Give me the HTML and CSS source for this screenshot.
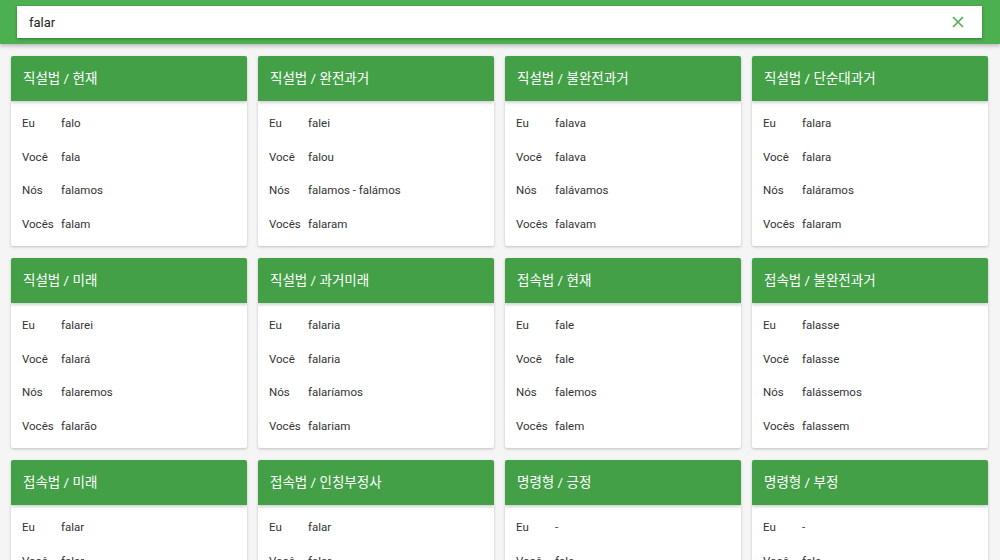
FILE: index.html
```html
<!DOCTYPE html>
<html lang="ko">
<head>
<meta charset="utf-8">
<link rel="stylesheet" href="styles.css">
</head>
<body>
<header class="topbar">
  <div class="search">
    <span class="search-text">falar</span>
    <svg class="clear" width="12" height="12" viewBox="0 0 12 12"><path d="M1 1L11 11M11 1L1 11" stroke="#4CAF50" stroke-width="1.6" fill="none"/></svg>
  </div>
</header>
<main class="grid">
  <section class="card"><h2 class="card-head">직설법 / 현재</h2><div class="card-body">
    <div class="row"><span class="who">Eu</span><span>falo</span></div>
    <div class="row"><span class="who">Você</span><span>fala</span></div>
    <div class="row"><span class="who">Nós</span><span>falamos</span></div>
    <div class="row"><span class="who">Vocês</span><span>falam</span></div>
  </div></section>
  <section class="card"><h2 class="card-head">직설법 / 완전과거</h2><div class="card-body">
    <div class="row"><span class="who">Eu</span><span>falei</span></div>
    <div class="row"><span class="who">Você</span><span>falou</span></div>
    <div class="row"><span class="who">Nós</span><span>falamos - falámos</span></div>
    <div class="row"><span class="who">Vocês</span><span>falaram</span></div>
  </div></section>
  <section class="card"><h2 class="card-head">직설법 / 불완전과거</h2><div class="card-body">
    <div class="row"><span class="who">Eu</span><span>falava</span></div>
    <div class="row"><span class="who">Você</span><span>falava</span></div>
    <div class="row"><span class="who">Nós</span><span>falávamos</span></div>
    <div class="row"><span class="who">Vocês</span><span>falavam</span></div>
  </div></section>
  <section class="card"><h2 class="card-head">직설법 / 단순대과거</h2><div class="card-body">
    <div class="row"><span class="who">Eu</span><span>falara</span></div>
    <div class="row"><span class="who">Você</span><span>falara</span></div>
    <div class="row"><span class="who">Nós</span><span>faláramos</span></div>
    <div class="row"><span class="who">Vocês</span><span>falaram</span></div>
  </div></section>
  <section class="card"><h2 class="card-head">직설법 / 미래</h2><div class="card-body">
    <div class="row"><span class="who">Eu</span><span>falarei</span></div>
    <div class="row"><span class="who">Você</span><span>falará</span></div>
    <div class="row"><span class="who">Nós</span><span>falaremos</span></div>
    <div class="row"><span class="who">Vocês</span><span>falarão</span></div>
  </div></section>
  <section class="card"><h2 class="card-head">직설법 / 과거미래</h2><div class="card-body">
    <div class="row"><span class="who">Eu</span><span>falaria</span></div>
    <div class="row"><span class="who">Você</span><span>falaria</span></div>
    <div class="row"><span class="who">Nós</span><span>falaríamos</span></div>
    <div class="row"><span class="who">Vocês</span><span>falariam</span></div>
  </div></section>
  <section class="card"><h2 class="card-head">접속법 / 현재</h2><div class="card-body">
    <div class="row"><span class="who">Eu</span><span>fale</span></div>
    <div class="row"><span class="who">Você</span><span>fale</span></div>
    <div class="row"><span class="who">Nós</span><span>falemos</span></div>
    <div class="row"><span class="who">Vocês</span><span>falem</span></div>
  </div></section>
  <section class="card"><h2 class="card-head">접속법 / 불완전과거</h2><div class="card-body">
    <div class="row"><span class="who">Eu</span><span>falasse</span></div>
    <div class="row"><span class="who">Você</span><span>falasse</span></div>
    <div class="row"><span class="who">Nós</span><span>falássemos</span></div>
    <div class="row"><span class="who">Vocês</span><span>falassem</span></div>
  </div></section>
  <section class="card"><h2 class="card-head">접속법 / 미래</h2><div class="card-body">
    <div class="row"><span class="who">Eu</span><span>falar</span></div>
    <div class="row"><span class="who">Você</span><span>falar</span></div>
    <div class="row"><span class="who">Nós</span><span>falarmos</span></div>
    <div class="row"><span class="who">Vocês</span><span>falarem</span></div>
  </div></section>
  <section class="card"><h2 class="card-head">접속법 / 인칭부정사</h2><div class="card-body">
    <div class="row"><span class="who">Eu</span><span>falar</span></div>
    <div class="row"><span class="who">Você</span><span>falar</span></div>
    <div class="row"><span class="who">Nós</span><span>falarmos</span></div>
    <div class="row"><span class="who">Vocês</span><span>falarem</span></div>
  </div></section>
  <section class="card"><h2 class="card-head">명령형 / 긍정</h2><div class="card-body">
    <div class="row"><span class="who">Eu</span><span>-</span></div>
    <div class="row"><span class="who">Você</span><span>fale</span></div>
    <div class="row"><span class="who">Nós</span><span>falemos</span></div>
    <div class="row"><span class="who">Vocês</span><span>falem</span></div>
  </div></section>
  <section class="card"><h2 class="card-head">명령형 / 부정</h2><div class="card-body">
    <div class="row"><span class="who">Eu</span><span>-</span></div>
    <div class="row"><span class="who">Você</span><span>fale</span></div>
    <div class="row"><span class="who">Nós</span><span>falemos</span></div>
    <div class="row"><span class="who">Vocês</span><span>falem</span></div>
  </div></section>
</main>
</body>
</html>
```
FILE: styles.css
```css
* { box-sizing: border-box; }
html, body { margin: 0; padding: 0; }
body {
  background: #f5f5f5;
  font-family: Roboto, "Noto Sans CJK KR", sans-serif;
  color: #333;
}
.topbar {
  height: 44px;
  background: #4CAF50;
  padding: 6px 18px 6px 17px;
  box-shadow: 0 2px 4px rgba(0,0,0,0.25);
  position: relative;
  z-index: 2;
}
.search {
  height: 32px;
  background: #fff;
  display: flex;
  align-items: center;
  justify-content: space-between;
  padding: 0 18px 0 12px;
  box-shadow: 0 1px 3px rgba(0,0,0,0.3);
}
.search-text {
  font-size: 13px;
  color: #222;
}
.clear { display: block; }
.grid {
  display: grid;
  grid-template-columns: repeat(4, 1fr);
  gap: 12px 11px;
  padding: 12px 12px 12px 11px;
}
.card {
  background: #fff;
  border-radius: 2px;
  box-shadow: 0 1px 3px rgba(0,0,0,0.22);
  overflow: hidden;
}
.card-head {
  margin: 0;
  height: 45px;
  display: flex;
  align-items: center;
  padding: 0 12px 3px;
  background: #43A047;
  color: #fff;
  font-size: 13.5px;
  font-weight: normal;
  box-shadow: 0 2px 3px rgba(0,0,0,0.18);
  position: relative;
}
.card-body {
  padding: 5px 11px;
}
.row {
  height: 33.75px;
  display: flex;
  align-items: center;
  font-size: 11.5px;
}
.who {
  width: 39px;
  flex: none;
}
```
